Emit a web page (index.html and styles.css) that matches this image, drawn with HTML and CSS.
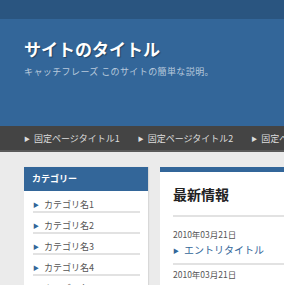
FILE: index.html
```html
<!DOCTYPE html>
<html lang="ja">
<head>
<meta charset="UTF-8" />
<meta name="viewport" content="width=device-width, initial-scale=1" />
<title>サイトのタイトル</title>
<link rel="stylesheet" href="styles.css">
</head>
<body>
<div class="topbar"></div>
<header class="header">
  <h1 class="site-title">サイトのタイトル</h1>
  <p class="site-desc">キャッチフレーズ このサイトの簡単な説明。</p>
</header>
<nav class="gnav">
  <a href="#">固定ページタイトル1</a>
  <a href="#">固定ページタイトル2</a>
  <a href="#">固定ページタイトル3</a>
</nav>
<div class="container">
  <aside class="sidebar">
    <h2 class="side-title">カテゴリー</h2>
    <ul class="cat-list">
      <li><a href="#">カテゴリ名1</a></li>
      <li><a href="#">カテゴリ名2</a></li>
      <li><a href="#">カテゴリ名3</a></li>
      <li><a href="#">カテゴリ名4</a></li>
      <li><a href="#">カテゴリ名5</a></li>
    </ul>
  </aside>
  <main class="main">
    <h2 class="main-title">最新情報</h2>
    <ul class="news">
      <li>
        <div class="date">2010年03月21日</div>
        <a href="#">エントリタイトル</a>
      </li>
      <li>
        <div class="date">2010年03月21日</div>
        <a href="#">エントリタイトル</a>
      </li>
    </ul>
  </main>
</div>
</body>
</html>
```

FILE: styles.css
```css
:root {
  --blue: #336699;
  --dark-blue: #2a5580;
  --nav-bg: #444444;
  --page-bg: #ebebeb;
  --line: #e2e2e2;
}
body {
  margin: 0;
  background: var(--page-bg);
  font-family: "Noto Sans CJK JP", "Noto Sans", sans-serif;
  color: #444;
  overflow: hidden;
}
a {
  text-decoration: none;
}
ul {
  list-style: none;
  margin: 0;
  padding: 0;
}
.topbar {
  height: 19px;
  background: var(--dark-blue);
}
.header {
  background: var(--blue);
  height: 107px;
  padding: 16px 24px 0;
  box-sizing: border-box;
}
.site-title {
  margin: 0;
  color: #fff;
  font-size: 17px;
  font-weight: bold;
  line-height: 28px;
  text-shadow: 1px 1px 1px rgba(0, 0, 0, 0.35);
}
.site-desc {
  margin: 2px 0 0;
  color: #b8c9dc;
  font-size: 9px;
  letter-spacing: 0.4px;
}
.gnav {
  display: flex;
  gap: 18px;
  height: 24px;
  align-items: center;
  padding-left: 24px;
  background: var(--nav-bg);
  border-bottom: 2px solid #5a5a5a;
  white-space: nowrap;
  overflow: hidden;
}
.gnav a {
  color: #dddddd;
  font-size: 9px;
}
.gnav a::before {
  content: "▶";
  font-size: 6px;
  margin-right: 4px;
  vertical-align: 1px;
}
.container {
  display: flex;
  gap: 12px;
  padding: 15px 0 0 24px;
}
.sidebar {
  width: 124px;
  flex-shrink: 0;
  background: #fff;
  box-shadow: 1px 0 1px rgba(0, 0, 0, 0.08);
}
.side-title {
  margin: 0;
  background: var(--blue);
  color: #fff;
  font-size: 9px;
  font-weight: bold;
  height: 24px;
  line-height: 24px;
  padding-left: 8px;
}
.cat-list {
  padding: 1px 8px 0 9px;
}
.cat-list li {
  border-bottom: 2px solid var(--line);
  height: 19px;
  line-height: 19px;
}
.cat-list a {
  color: #555;
  font-size: 9px;
}
.cat-list a::before {
  content: "▶";
  color: var(--blue);
  font-size: 6px;
  margin-right: 5px;
  vertical-align: 1px;
}
.main {
  flex: 1;
  min-width: 160px;
  background: #fff;
  border-top: 5px solid var(--blue);
  padding: 0 13px;
}
.main-title {
  margin: 0 0 8px;
  font-size: 14px;
  font-weight: bold;
  color: #222;
  height: 43px;
  line-height: 44px;
  border-bottom: 2px solid var(--line);
}
.news li {
  padding: 2px 0 5px;
  border-bottom: 2px solid var(--line);
}
.date {
  font-size: 8.5px;
  color: #555;
  line-height: 15px;
}
.news a {
  display: block;
  color: var(--blue);
  font-size: 10px;
  line-height: 15px;
}
.news a::before {
  content: "▶";
  font-size: 6px;
  margin-right: 5px;
  vertical-align: 1px;
}
```
